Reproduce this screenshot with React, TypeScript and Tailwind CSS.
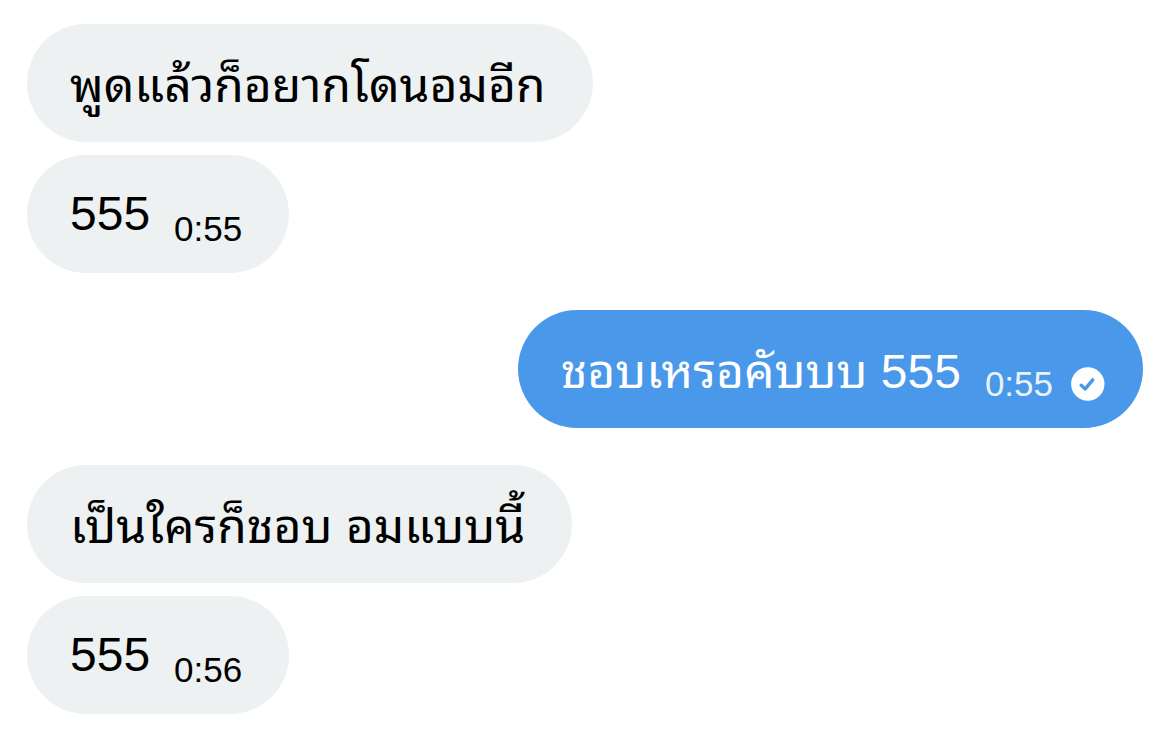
type Message = {
  id: number;
  text: string;
  time?: string;
  sent?: boolean;
};

const groups: Message[][] = [
  [
    { id: 1, text: 'พูดแล้วก็อยากโดนอมอีก' },
    { id: 2, text: '555', time: '0:55' },
  ],
  [{ id: 3, text: 'ชอบเหรอคับบบ 555', time: '0:55', sent: true }],
  [
    { id: 4, text: 'เป็นใครก็ชอบ อมแบบนี้' },
    { id: 5, text: '555', time: '0:56' },
  ],
];

const hasThai = (text: string) => /[\u0E00-\u0E7F]/.test(text);

function SentIcon() {
  return (
    <svg viewBox="0 0 34 34" className="mb-[3px] ml-[18px] size-[34px] shrink-0" role="img" aria-label="Sent">
      <circle cx="16.8" cy="17" r="16.7" fill="#fff" />
      <path
        d="M10.2 18.2 14.3 21.9 21.7 12.9"
        fill="none"
        stroke="#4a98ea"
        strokeWidth="3.4"
        strokeLinecap="round"
        strokeLinejoin="round"
      />
    </svg>
  );
}

function Bubble({ message }: { message: Message }) {
  const { text, time, sent } = message;
  const thai = hasThai(text);
  return (
    <li
      className={`flex items-end rounded-[59px] pb-6 pl-[43px] ${thai ? 'pt-8' : 'pt-[29px]'} ${
        sent ? 'self-end bg-[#4a98ea] pr-[38px] text-white' : 'self-start bg-[#edf1f2] pr-[47px] text-black'
      }`}
    >
      <p className={`text-[48px] leading-[60px] ${thai ? 'mb-[2px]' : 'mb-[5px]'}`}>{text}</p>
      {time && (
        <time className={`ml-6 text-[35px] leading-10 ${sent ? 'text-[#e8f3fd]' : ''}`}>{time}</time>
      )}
      {sent && <SentIcon />}
    </li>
  );
}

export default function App() {
  return (
    <main className="flex min-h-screen flex-col gap-[37px] bg-white px-[27px] py-6 font-['Liberation_Sans','Noto_Sans_Thai_Looped',sans-serif]">
      {groups.map((group) => (
        <ul key={group[0].id} className="flex flex-col gap-[13px]">
          {group.map((message) => (
            <Bubble key={message.id} message={message} />
          ))}
        </ul>
      ))}
    </main>
  );
}
